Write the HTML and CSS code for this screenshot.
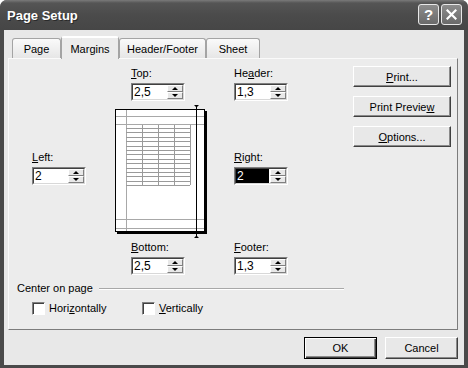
FILE: index.html
```html
<html lang="en">

<head>
    <meta charset="UTF-8">
    <title>Page Setup</title>
    <link rel="stylesheet" href="styles.css">
</head>

<body>
    <div class="window">
        <div class="titlebar">
            <span class="title">Page Setup</span>
            <div class="caption-buttons">
                <span class="cap-btn">?</span>
                <span class="cap-btn">
                    <svg width="11" height="11" viewBox="0 0 11 11">
                        <path d="M1.5 1.5 L9.5 9.5 M9.5 1.5 L1.5 9.5" stroke="#fff" stroke-width="2.2" stroke-linecap="square"/>
                    </svg>
                </span>
            </div>
        </div>

        <div class="client">
            <div class="tabs">
                <div class="tab tab-page">Page</div>
                <div class="tab tab-margins active">Margins</div>
                <div class="tab tab-header">Header/Footer</div>
                <div class="tab tab-sheet">Sheet</div>
            </div>

            <div class="panel">
                <div class="panel-main">
                    <div class="margins">
                        <div class="cell"></div>
                        <div class="cell cell-top">
                            <div class="label"><u>T</u>op:</div>
                            <div class="spin">
                                <div class="spin-inner">
                                    <div class="spin-field">2,5</div>
                                    <div class="spin-buttons"><span class="spin-up"></span><span class="spin-down"></span></div>
                                </div>
                            </div>
                        </div>
                        <div class="cell cell-top">
                            <div class="label">He<u>a</u>der:</div>
                            <div class="spin">
                                <div class="spin-inner">
                                    <div class="spin-field">1,3</div>
                                    <div class="spin-buttons"><span class="spin-up"></span><span class="spin-down"></span></div>
                                </div>
                            </div>
                        </div>

                        <div class="cell cell-side">
                            <div class="label"><u>L</u>eft:</div>
                            <div class="spin">
                                <div class="spin-inner">
                                    <div class="spin-field">2</div>
                                    <div class="spin-buttons"><span class="spin-up"></span><span class="spin-down"></span></div>
                                </div>
                            </div>
                        </div>
                        <div class="cell preview">
                            <svg width="94" height="136" viewBox="0 0 94 136">
                                <rect x="90" y="7" width="2" height="123" fill="#000"/>
                                <rect x="2" y="128" width="90" height="2" fill="#000"/>
                                <rect x="0.5" y="5.5" width="89" height="122" fill="#fff" stroke="#000"/>
                                <g stroke="#a8a8a8" stroke-width="1">
                                    <path d="M1 12.5 H89 M1 20.5 H89 M1 115.5 H89 M1 124.5 H89 M11.5 6 V127"/>
                                </g>
                                <g stroke="#9a9a9a" stroke-width="1">
                                    <path d="M11 24.5 H75 M11 28.5 H75 M11 33.5 H75 M11 37.5 H75 M11 42.5 H75 M11 46.5 H75 M11 50.5 H75 M11 55.5 H75 M11 59.5 H75 M11 64.5 H75 M11 68.5 H75 M11 72.5 H75 M11 77.5 H75 M11 81.5 H75"/>
                                    <path d="M27.5 21 V81 M43.5 21 V81 M59.5 21 V81 M75.5 21 V81"/>
                                </g>
                                <path d="M81.5 3 V132" stroke="#000" stroke-width="1"/>
                                <polygon points="79,1 84,1 81.5,3.5" fill="#000"/>
                                <polygon points="79,134 84,134 81.5,131.5" fill="#000"/>
                            </svg>
                        </div>
                        <div class="cell cell-side">
                            <div class="label"><u>R</u>ight:</div>
                            <div class="spin">
                                <div class="spin-inner">
                                    <div class="spin-field selected"><span>2</span></div>
                                    <div class="spin-buttons"><span class="spin-up"></span><span class="spin-down"></span></div>
                                </div>
                            </div>
                        </div>

                        <div class="cell"></div>
                        <div class="cell cell-bottom">
                            <div class="label"><u>B</u>ottom:</div>
                            <div class="spin">
                                <div class="spin-inner">
                                    <div class="spin-field">2,5</div>
                                    <div class="spin-buttons"><span class="spin-up"></span><span class="spin-down"></span></div>
                                </div>
                            </div>
                        </div>
                        <div class="cell cell-bottom">
                            <div class="label"><u>F</u>ooter:</div>
                            <div class="spin">
                                <div class="spin-inner">
                                    <div class="spin-field">1,3</div>
                                    <div class="spin-buttons"><span class="spin-up"></span><span class="spin-down"></span></div>
                                </div>
                            </div>
                        </div>
                    </div>

                    <div class="side-buttons">
                        <div class="btn"><u>P</u>rint...</div>
                        <div class="btn">Print Previe<u>w</u></div>
                        <div class="btn"><u>O</u>ptions...</div>
                    </div>
                </div>

                <div class="center-group">
                    <div class="group-title">Center on page</div>
                    <div class="checks">
                        <div class="check"><span class="box"></span><span>Hori<u>z</u>ontally</span></div>
                        <div class="check"><span class="box"></span><span><u>V</u>ertically</span></div>
                    </div>
                </div>
            </div>

            <div class="footer">
                <div class="btn btn-default">OK</div>
                <div class="btn">Cancel</div>
            </div>
        </div>
    </div>
</body>

</html>
```

FILE: styles.css
```css
body {
    margin: 0;
    font-family: "Liberation Sans", Arial, sans-serif;
    font-size: 11px;
    color: #000;
    background: #fff;
}
.window {
    width: 468px;
    height: 368px;
    display: flex;
    flex-direction: column;
    background: #4a4a4a;
    border-radius: 7px 7px 0 0;
}
.titlebar {
    height: 30px;
    flex: none;
    display: flex;
    align-items: center;
    justify-content: space-between;
    padding: 0 6px 0 7px;
    border-radius: 7px 7px 0 0;
    background: linear-gradient(#7a7a7a 0, #555 3px, #4b4b4b 50%, #464646 100%);
}
.title {
    color: #fff;
    font-weight: bold;
    font-size: 13px;
    text-shadow: 1px 1px #2a2a2a;
}
.caption-buttons {
    display: flex;
    gap: 2px;
    margin-top: -1px;
}
.cap-btn {
    width: 19px;
    height: 19px;
    border: 1px solid #e8e8e8;
    border-radius: 3px;
    background: linear-gradient(#8c8c8c, #6a6a6a);
    display: flex;
    align-items: center;
    justify-content: center;
    color: #fff;
    font-weight: bold;
    font-size: 15px;
}
.client {
    flex: 1;
    margin: 0 4px 3px 4px;
    padding: 6px 6px 0 4px;
    background: #e8e8e8;
}
.tabs {
    display: flex;
    align-items: flex-end;
    height: 22px;
    padding-left: 4px;
}
.tab {
    height: 20px;
    box-sizing: border-box;
    border: 1px solid #a4a4a4;
    border-bottom: none;
    border-radius: 3px 3px 0 0;
    background: linear-gradient(#fafafa, #e6e6e6);
    display: flex;
    align-items: center;
    justify-content: center;
    padding-top: 1px;
}
.tab-page {
    width: 49px;
}
.tab-margins {
    width: 58px;
}
.tab-header {
    width: 87px;
}
.tab-sheet {
    width: 54px;
}
.tab.active {
    height: 23px;
    margin-bottom: -1px;
    background: #ececec;
    border-top: 2px solid #fff;
    position: relative;
    z-index: 1;
}
.panel {
    width: 450px;
    height: 272px;
    box-sizing: border-box;
    border: 1px solid;
    border-color: #fafafa #7c7c7c #7c7c7c #fafafa;
    background: #ececec;
}
.panel-main {
    display: flex;
}
.margins {
    display: grid;
    grid-template-columns: 83px 119px 60px;
    grid-template-rows: 38px 134px 38px;
    margin: 7px 0 0 23px;
}
.label {
    line-height: 13px;
    height: 13px;
}
.cell-top .label {
    margin-top: 1px;
}
.cell-top .spin,
.cell-side .spin,
.cell-bottom .spin {
    margin-top: 3px;
}
.margins > .cell-top:nth-child(2),
.margins > .cell-bottom:nth-child(8) {
    padding-left: 16px;
}
.cell-side {
    padding-top: 47px;
}
.cell-bottom {
    padding-top: 3px;
}
.preview svg {
    display: block;
}
.spin {
    width: 54px;
    height: 18px;
    box-sizing: border-box;
    border: 1px solid;
    border-color: #808080 #fff #fff #808080;
}
.spin-inner {
    height: 100%;
    box-sizing: border-box;
    border: 1px solid;
    border-color: #404040 #d8d8d8 #d8d8d8 #404040;
    background: #fff;
    display: flex;
}
.spin-field {
    flex: 1;
    font-size: 12px;
    line-height: 14px;
    padding-left: 1px;
}
.spin-field.selected {
    background: #000;
    color: #fff;
    margin-right: 1px;
}
.spin-buttons {
    width: 16px;
    display: flex;
    flex-direction: column;
}
.spin-up,
.spin-down {
    flex: 1;
    box-sizing: border-box;
    border: 1px solid;
    border-color: #fff #808080 #808080 #fff;
    background: #e8e8e8;
    display: flex;
    align-items: center;
    justify-content: center;
}
.spin-up::after {
    content: "";
    border-left: 3px solid transparent;
    border-right: 3px solid transparent;
    border-bottom: 3px solid #000;
}
.spin-down::after {
    content: "";
    border-left: 3px solid transparent;
    border-right: 3px solid transparent;
    border-top: 3px solid #000;
}
.side-buttons {
    display: flex;
    flex-direction: column;
    gap: 9px;
    margin: 7px 0 0 59px;
}
.btn {
    width: 98px;
    height: 21px;
    box-sizing: border-box;
    border: 1px solid;
    border-color: #fff #404040 #404040 #fff;
    box-shadow: inset -1px -1px #8a8a8a;
    background: #e8e8e8;
    display: flex;
    align-items: center;
    justify-content: center;
}
.center-group {
    padding-left: 8px;
    margin-top: 6px;
}
.group-title {
    width: 327px;
    display: flex;
    align-items: center;
    gap: 6px;
    line-height: 13px;
}
.group-title::after {
    content: "";
    flex: 1;
    height: 1px;
    background: #a8a8a8;
    border-bottom: 1px solid #fff;
}
.checks {
    display: flex;
    margin: 7px 0 0 15px;
}
.check {
    width: 110px;
    display: flex;
    align-items: center;
    gap: 4px;
    line-height: 13px;
}
.box {
    width: 13px;
    height: 13px;
    box-sizing: border-box;
    border: 1px solid;
    border-color: #808080 #fff #fff #808080;
    box-shadow: inset 1px 1px #404040;
    background: #fff;
}
.footer {
    display: flex;
    justify-content: flex-end;
    gap: 8px;
    margin-top: 7px;
}
.footer .btn {
    width: 73px;
    height: 22px;
}
.btn-default {
    border-color: #000;
    box-shadow: inset 1px 1px #fff, inset -1px -1px #404040, inset -2px -2px #8a8a8a;
}
```
